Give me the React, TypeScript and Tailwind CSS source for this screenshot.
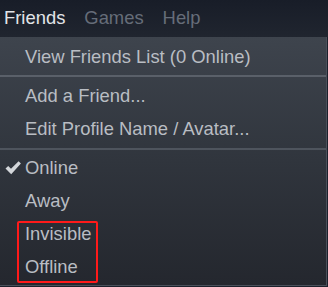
import React from "react";

const Row = ({ children, check }: { children: React.ReactNode; check?: boolean }) => (
  <div className="relative flex h-[33px] items-center pl-[25px]">
    {check && (
      <svg className="absolute left-[5px] top-[9px]" width="16" height="14" viewBox="0 0 16 14">
        <path d="M0.5 7.5 L3.2 4.9 L6 7.8 L13.6 0.2 L15.9 2.6 L6.2 13.3 Z" fill="#d3d6da" />
      </svg>
    )}
    <span>{children}</span>
  </div>
);

export default function App() {
  return (
    <div
      className="relative h-[287px] w-[328px] overflow-hidden bg-[#1c212c] text-[18.4px] leading-none"
      style={{ fontFamily: '"Liberation Sans", Arial, sans-serif' }}
    >
      <div className="flex h-[37px] items-center gap-[19px] bg-gradient-to-b from-[#181d28] to-[#20252f] pl-[4px]">
        <span className="text-[#e2e5e8]">Friends</span>
        <span className="text-[#666d79]">Games</span>
        <span className="text-[#666d79]">Help</span>
      </div>
      <div className="h-[249px] w-[327px] border-r border-b border-[#4a505a] bg-gradient-to-b from-[#3e444d] via-[#30353d] to-[#24272e] pt-[4px] text-[#b9bdc3]">
        <Row>View Friends List (0 Online)</Row>
        <div className="mt-[1px] mb-[3px] h-[2px] bg-[#5a6069]" />
        <Row>Add a Friend...</Row>
        <Row>Edit Profile Name / Avatar...</Row>
        <div className="mt-[2px] mb-[2px] h-[2px] bg-[#4e545d]" />
        <Row check>Online</Row>
        <Row>Away</Row>
        <div className="relative">
          <div className="pointer-events-none absolute left-[17px] top-[3px] h-[62px] w-[81px] rounded-[2px] border-[2.5px] border-[#ff1a1a]" />
          <Row>Invisible</Row>
          <Row>Offline</Row>
        </div>
      </div>
    </div>
  );
}
